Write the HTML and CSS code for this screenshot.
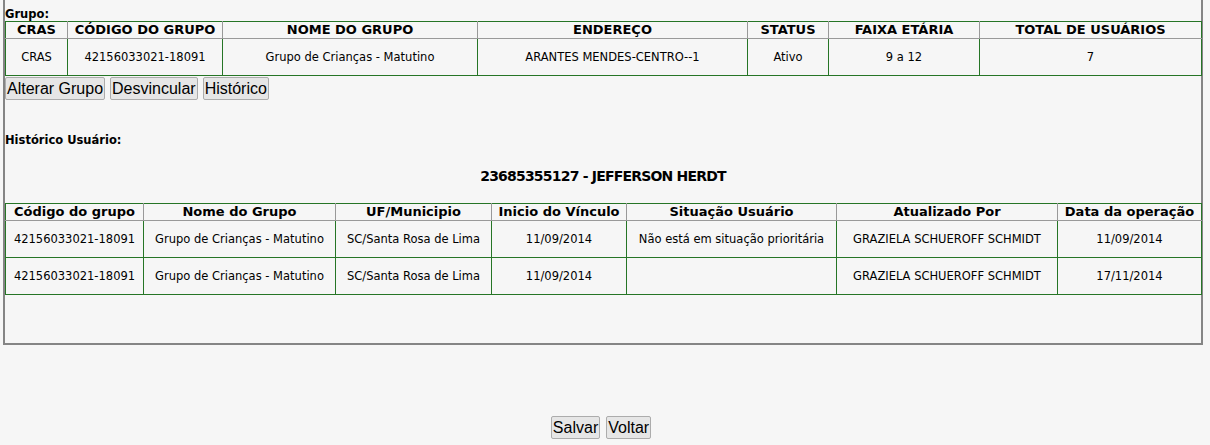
FILE: index.html
```html
<!DOCTYPE html>
<html lang="pt-BR">
<head>
  <meta charset="UTF-8">
  <title>Histórico Usuário</title>
  <link rel="stylesheet" href="styles.css">
</head>
<body>

<div class="panel">
  <div class="label">Grupo:</div>
  <table class="grid grupo">
    <colgroup>
      <col style="width:62px"><col style="width:155px"><col style="width:255px"><col style="width:270px">
      <col style="width:81px"><col style="width:151px"><col style="width:222px">
    </colgroup>
    <tr>
      <th>CRAS</th>
      <th>CÓDIGO DO GRUPO</th>
      <th>NOME DO GRUPO</th>
      <th>ENDEREÇO</th>
      <th>STATUS</th>
      <th>FAIXA ETÁRIA</th>
      <th>TOTAL DE USUÁRIOS</th>
    </tr>
    <tr>
      <td>CRAS</td>
      <td>42156033021-18091</td>
      <td>Grupo de Crianças - Matutino</td>
      <td>ARANTES MENDES-CENTRO--1</td>
      <td>Ativo</td>
      <td>9 a 12</td>
      <td>7</td>
    </tr>
  </table>

  <div class="actions">
    <button>Alterar Grupo</button>
    <button>Desvincular</button>
    <button>Histórico</button>
  </div>

  <div class="label historico">Histórico Usuário:</div>
  <div class="usuario">23685355127 - JEFFERSON HERDT</div>

  <table class="grid">
    <colgroup>
      <col style="width:138px"><col style="width:192px"><col style="width:156px"><col style="width:135px">
      <col style="width:210px"><col style="width:221px"><col style="width:144px">
    </colgroup>
    <tr>
      <th>Código do grupo</th>
      <th>Nome do Grupo</th>
      <th>UF/Municipio</th>
      <th>Inicio do Vínculo</th>
      <th>Situação Usuário</th>
      <th>Atualizado Por</th>
      <th>Data da operação</th>
    </tr>
    <tr>
      <td>42156033021-18091</td>
      <td>Grupo de Crianças - Matutino</td>
      <td>SC/Santa Rosa de Lima</td>
      <td>11/09/2014</td>
      <td>Não está em situação prioritária</td>
      <td>GRAZIELA SCHUEROFF SCHMIDT</td>
      <td>11/09/2014</td>
    </tr>
    <tr>
      <td>42156033021-18091</td>
      <td>Grupo de Crianças - Matutino</td>
      <td>SC/Santa Rosa de Lima</td>
      <td>11/09/2014</td>
      <td></td>
      <td>GRAZIELA SCHUEROFF SCHMIDT</td>
      <td>17/11/2014</td>
    </tr>
  </table>
</div>

<div class="footer">
  <button>Salvar</button>
  <button>Voltar</button>
</div>

</body>
</html>
```

FILE: styles.css
```css
body {
  margin: 0;
  background-color: #f6f6f6;
  font-family: 'DejaVu Sans', Verdana, sans-serif;
  font-size: 11.5px;
  color: #000;
}

.panel {
  margin-left: 3px;
  width: 1196px;
  border: 2px solid #858585;
  border-top: none;
  padding-bottom: 48px;
}

.label {
  font-weight: bold;
  line-height: 14px;
  padding-top: 7px;
}

.historico {
  padding-top: 0;
  margin-top: 33px;
}

.usuario {
  text-align: center;
  font-weight: bold;
  font-size: 14px;
  line-height: 18px;
  letter-spacing: -0.8px;
  margin-top: 20px;
  margin-bottom: 18px;
}

.grid {
  width: 1196px;
  table-layout: fixed;
  border-collapse: collapse;
}

.grid th {
  font-size: 13px;
  font-weight: bold;
  line-height: 16px;
  padding: 0;
  border: 1px solid #999;
  border-top-color: #267526;
  text-align: center;
  white-space: nowrap;
}

.grid th:first-child {
  border-left-color: #267526;
}

.grid th:last-child {
  border-right-color: #267526;
}

.grid td {
  height: 36px;
  padding: 0;
  border: 1px solid #267526;
  text-align: center;
  vertical-align: middle;
  white-space: nowrap;
}

.actions {
  display: flex;
  gap: 5px;
  margin-top: 1px;
}

button {
  font-family: 'Liberation Sans', Arial, sans-serif;
  font-size: 16px;
  line-height: 19px;
  padding: 1px 1px;
  color: #000;
  background-color: #e6e6e6;
  border: 1px solid #acacac;
  border-radius: 2px;
}

.footer {
  margin-left: 3px;
  width: 1196px;
  margin-top: 71px;
  display: flex;
  justify-content: center;
  gap: 6px;
}
```
